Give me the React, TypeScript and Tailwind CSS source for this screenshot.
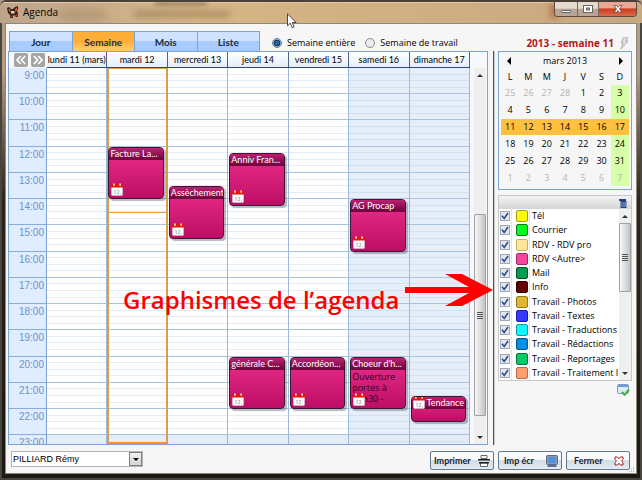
import { useState } from "react";
import { clsx } from "clsx";

const tabs = ["Jour", "Semaine", "Mois", "Liste"];

const days = ["lundi 11 (mars)", "mardi 12", "mercredi 13", "jeudi 14", "vendredi 15", "samedi 16", "dimanche 17"];

const firstHour = 9;
// the grid is cut off shortly after 23:00
const visibleHours = 14.33;
const hours = Array.from({ length: 15 }, (_, i) => firstHour + i);

type CalendarEvent = {
  day: number;
  start: number;
  end: number;
  title: string;
  note?: string;
};

const events: CalendarEvent[] = [
  { day: 1, start: 12, end: 14, title: "Facture La..." },
  { day: 2, start: 13.5, end: 15.5, title: "Assèchement" },
  { day: 3, start: 12.25, end: 14.25, title: "Anniv Fran..." },
  { day: 5, start: 14, end: 16, title: "AG Procap" },
  { day: 3, start: 20, end: 22, title: "générale C..." },
  { day: 4, start: 20, end: 22, title: "Accordéon..." },
  { day: 5, start: 20, end: 22, title: "Choeur d'h...", note: "Ouverture portes à 19h30 -" },
  { day: 6, start: 21.5, end: 22.5, title: "Tendance" },
];

const weeks = [
  [25, 26, 27, 28, 1, 2, 3],
  [4, 5, 6, 7, 8, 9, 10],
  [11, 12, 13, 14, 15, 16, 17],
  [18, 19, 20, 21, 22, 23, 24],
  [25, 26, 27, 28, 29, 30, 31],
  [1, 2, 3, 4, 5, 6, 7],
];

const categories = [
  { label: "Tél", color: "bg-[#ffff00] border-[#a09a20]" },
  { label: "Courrier", color: "bg-[#00ff1a] border-[#0a7a18]" },
  { label: "RDV - RDV pro", color: "bg-[#ffe79a] border-[#c9b060]" },
  { label: "RDV <Autre>", color: "bg-[#f7459c] border-[#a02868]" },
  { label: "Mail", color: "bg-[#009c50] border-[#04502c]" },
  { label: "Info", color: "bg-[#660000] border-[#2c0000]" },
  { label: "Travail - Photos", color: "bg-[#e0b830] border-[#94781c]" },
  { label: "Travail - Textes", color: "bg-[#3838ff] border-[#1c1ca0]" },
  { label: "Travail - Traductions", color: "bg-[#10f8ff] border-[#149aa4]" },
  { label: "Travail - Rédactions", color: "bg-[#0090e4] border-[#0c5488]" },
  { label: "Travail - Reportages", color: "bg-[#00cc66] border-[#0c703c]" },
  { label: "Travail - Traitement I", color: "bg-[#ff9c70] border-[#b86a48]" },
];

const toPercent = (value: number) => `${(value / visibleHours) * 100}%`;

function AppIcon() {
  return (
    <svg viewBox="0 0 12 12" className="h-3 w-3">
      <path d="M0 2l2-1 2 2h2l2-2 3-1v3l-1 2 1 2v4H8.500V9.500H6V12H3V9L1 7z" fill="#3a2118" />
      <path d="M1.500 2.500l2 1v2H2zM8 3l2-1.500V4L8.500 6z" fill="#d8603c" />
      <path d="M4 5h3.500v2.500H4z" fill="#e8d4b0" />
      <path d="M3.500 9.500h2v2h-2zM8.500 8h2v2.500h-2z" fill="#a8302c" />
    </svg>
  );
}

function EventIcon({ className }: { className?: string }) {
  return (
    <svg viewBox="0 0 12 13" className={clsx("h-[13px] w-3 shrink-0", className)}>
      <rect x="0.5" y="2" width="11" height="10.5" rx="0.8" fill="#fff" stroke="#cfcfcf" strokeWidth="0.6" />
      <path d="M0 1h12v3.500H0z" fill="#e8140c" />
      <path d="M2.200 0.500h1.400v2.200H2.200zM8.400.5h1.400v2.200H8.400z" fill="#fff" />
      <path d="M3.200 7.500h1v3.500M5.800 7.500h2v1.600l-2 1.600h2.400M9 11h1" fill="none" stroke="#a4a4a4" strokeWidth="0.8" />
    </svg>
  );
}

function WindowButtons() {
  return (
    <div className="mr-[5px] flex h-[15px] self-start overflow-hidden rounded-b-[4px] border border-t-0 border-[#5c4a40]">
      <button aria-label="Réduire" className="grid w-[23px] place-items-center border-r border-[#7c6a5c] bg-linear-to-b from-[#e4dace] from-45% to-[#b8a594] to-50%">
        <span className="mt-1 h-[3px] w-[10px] rounded-[1px] border border-[#666] bg-white" />
      </button>
      <button aria-label="Agrandir" className="grid w-[21px] place-items-center border-r border-[#7c6a5c] bg-linear-to-b from-[#e4dace] from-45% to-[#b8a594] to-50%">
        <svg viewBox="0 0 10 8" className="h-2 w-[10px]">
          <rect x="0.5" y="0.5" width="9" height="7" fill="#fff" stroke="#666" />
          <rect x="3.5" y="3" width="3" height="2" fill="#b8a594" stroke="#666" />
        </svg>
      </button>
      <button aria-label="Fermer la fenêtre" className="grid w-[37px] place-items-center bg-linear-to-b from-[#e8a898] from-40% via-[#cc3c20] via-50% to-[#dc6848]">
        <svg viewBox="0 0 10 8" className="h-2 w-[10px]">
          <path d="M1 .5h2.500L5 2.400 6.500.5H9L6.500 4 9 7.500H6.500L5 5.600 3.500 7.500H1L3.500 4z" fill="#fff" stroke="#5a3434" strokeWidth="0.7" />
        </svg>
      </button>
    </div>
  );
}

function TitleBar() {
  return (
    <header className="relative flex h-[23px] shrink-0 items-center overflow-hidden rounded-t-[6px] border-t-2 border-[#4a4038] bg-linear-to-r from-[#bda58c] via-[#d6b586] via-30% to-[#c8a880]">
      <div className="absolute top-0 left-0 h-px w-full bg-[#e0cba8]" />
      <div className="absolute top-[7px] left-[60px] h-3 w-[46px] rounded-full bg-[#8a6c4c]/30 blur-[4px]" />
      <div className="absolute top-[9px] left-[134px] h-1.5 w-[96px] rounded-full bg-[#6c5034]/40 blur-[3px]" />
      <div className="absolute top-0 left-[155px] h-[3px] w-[52px] bg-[#5c442c]/60 blur-[2px]" />
      <div className="absolute top-[1px] right-[84px] h-4 w-2 rounded-full bg-[#b04c28]/60 blur-[3px]" />
      <div className="relative flex flex-1 items-center gap-1 pb-0.5 pl-[7px]">
        <AppIcon />
        <h1 className="text-[10px] leading-3 text-black">Agenda</h1>
      </div>
      <div className="relative flex h-full">
        <WindowButtons />
      </div>
    </header>
  );
}

function NavButton({ label, back }: { label: string; back?: boolean }) {
  return (
    <button aria-label={label} className="grid h-[14px] w-[14px] place-items-center rounded-[2px] bg-[#a4a4a4]">
      <svg viewBox="0 0 12 12" className={clsx("h-3 w-3", !back && "rotate-180")}>
        <path d="M5.800 2L2 6l3.800 4M10.200 2L6.400 6l3.800 4" fill="none" stroke="#fff" strokeWidth="1.700" />
      </svg>
    </button>
  );
}

function ScrollBar({ className, thumb }: { className?: string; thumb: string }) {
  return (
    <div className={clsx("flex flex-col items-center bg-[#efefef]", className)}>
      <button aria-label="Défiler vers le haut" className="grid h-[14px] place-items-center">
        <svg viewBox="0 0 6 3" className="h-[3px] w-1.5"><path d="M3 0l3 3H0z" fill="#333" /></svg>
      </button>
      <div className="relative w-full flex-1">
        <div className={clsx("absolute inset-x-0 grid place-items-center rounded-[1px] border border-[#a0a0a0] bg-linear-to-r from-[#f8f8f8] to-[#c4c4c8]", thumb)}>
          <div className="flex h-[7px] w-1.5 flex-col justify-between">
            <i className="h-px bg-[#555]" />
            <i className="h-px bg-[#555]" />
            <i className="h-px bg-[#555]" />
            <i className="h-px bg-[#555]" />
          </div>
        </div>
      </div>
      <button aria-label="Défiler vers le bas" className="grid h-[14px] place-items-center">
        <svg viewBox="0 0 6 3" className="h-[3px] w-1.5"><path d="M0 0h6L3 3z" fill="#333" /></svg>
      </button>
    </div>
  );
}

function EventCard({ event }: { event: CalendarEvent }) {
  const short = event.end - event.start <= 1;

  return (
    <article
      className="absolute right-[3px] left-px z-10 flex flex-col overflow-hidden rounded-[4px] border border-[#3c1830] bg-linear-to-b from-[#ec2c8c] to-[#bc0c64] shadow-[2px_2px_1px_rgba(70,80,100,0.4)]"
      style={{ top: toPercent(event.start - firstHour), height: toPercent(event.end - event.start) }}
    >
      <h3 className="flex h-3 shrink-0 items-center bg-linear-to-b from-[#c02074] to-[#6c0438] pl-px font-[Lato,sans-serif] text-[9px] leading-3 whitespace-nowrap text-white">
        {short && <EventIcon className="mr-0.5" />}
        {event.title}
      </h3>
      {event.note && <p className="pt-px pl-px text-[9px] leading-[11px] text-[#2c0418]">{event.note}</p>}
      {!short && <EventIcon className="absolute bottom-0.5 left-0.5" />}
    </article>
  );
}

function WeekGrid() {
  return (
    <section className="flex min-h-0 flex-1 border border-[#7ba3d4] bg-[#f6f8fb]">
      <div className="flex min-w-0 flex-1 flex-col">
        <div className="flex h-4 shrink-0">
          <div className="flex w-[38px] shrink-0 items-center justify-center gap-[3px] pl-0.5">
            <NavButton label="Semaine précédente" back />
            <NavButton label="Semaine suivante" />
          </div>
          <div className="grid flex-1 grid-cols-7 border-b border-[#2f4c7c] bg-linear-to-b from-white to-[#e4eefc]">
            {days.map((day) => (
              <div key={day} className="border-r border-[#4c6488] text-center font-[Lato,sans-serif] text-[9px] leading-[15px] whitespace-nowrap text-black">
                {day}
              </div>
            ))}
          </div>
        </div>

        <div className="flex min-h-0 flex-1 overflow-hidden">
          <div className="w-[38px] shrink-0 overflow-hidden border-r border-[#7ba3d4] bg-[#e0ecff]">
            {hours.map((hour) => (
              <div
                key={hour}
                className="border-b border-[#88add8] pt-0.5 pr-0.5 text-right font-['Liberation_Sans',sans-serif] text-[10px] leading-3 text-[#6c93c4]"
                style={{ height: toPercent(1) }}
              >
                {hour}:00
              </div>
            ))}
          </div>
          <div className="grid flex-1 grid-cols-7">
            {days.map((day, index) => (
              <div
                key={day}
                className={clsx("relative min-h-0 border-r border-[#9db9da]", index > 4 ? "bg-[#e6eef9]" : "bg-white", index === 1 && "z-[1]")}
              >
                <div className="h-full overflow-hidden">
                  {hours.map((hour) => (
                    <div
                      key={hour}
                      className={clsx("flex flex-col border-b border-[#a9c3de]", hour === 23 && "bg-[#e4ecf7]")}
                      style={{ height: toPercent(1) }}
                    >
                      <div className={clsx("flex-1 border-b", index > 4 ? "border-[#d3e0f0]" : "border-[#e4edf6]")} />
                      <div className={clsx("flex-1 border-b", index > 4 ? "border-[#d3e0f0]" : "border-[#e4edf6]")} />
                      <div className={clsx("flex-1 border-b", index > 4 ? "border-[#d3e0f0]" : "border-[#e4edf6]")} />
                      <div className="flex-1" />
                    </div>
                  ))}
                </div>
                {index === 1 && (
                  <>
                    <div className="absolute inset-y-0 -right-px left-0 border-x-2 border-t border-b-2 border-x-[#d6a04a] border-t-[#d6a04a] border-b-[#f79410]" />
                    <div className="absolute inset-x-0 h-px bg-[#e8a030]" style={{ top: toPercent(14.5 - firstHour) }} />
                  </>
                )}
                {events.filter((event) => event.day === index).map((event) => (
                  <EventCard key={event.title} event={event} />
                ))}
              </div>
            ))}
          </div>
        </div>
      </div>
      <ScrollBar className="mt-4 mr-px ml-1 w-3 shrink-0" thumb="top-[38%] h-[58%]" />
    </section>
  );
}

function MiniCalendar() {
  return (
    <section className="border border-[#7ba3d4] px-0.5 pb-[3px] text-[9px] leading-4 text-black">
      <div className="flex h-[17px] items-center justify-between px-1.5">
        <button aria-label="Mois précédent">
          <svg viewBox="0 0 4 8" className="h-2 w-1"><path d="M4 0v8L0 4z" /></svg>
        </button>
        <span>mars 2013</span>
        <button aria-label="Mois suivant">
          <svg viewBox="0 0 4 8" className="h-2 w-1"><path d="M0 0v8l4-4z" /></svg>
        </button>
      </div>
      <table className="h-[117px] w-full table-fixed border-collapse text-center">
        <thead>
          <tr>
            {["L", "M", "M", "J", "V", "S", "D"].map((letter, i) => (
              <th key={i} className="p-0 font-normal">{letter}</th>
            ))}
          </tr>
        </thead>
        <tbody>
          {weeks.map((week, row) => (
            <tr key={row} className={clsx(row === 2 && "bg-[#ffbf3f]")}>
              {week.map((date, col) => {
                const outside = (row === 0 && date > 20) || row === 5;
                return (
                  <td key={col} className={clsx("p-0", outside && "text-[#b4b4b4]", col === 6 && row !== 2 && "bg-[#d6ffa8]")}>
                    {date}
                  </td>
                );
              })}
            </tr>
          ))}
        </tbody>
      </table>
    </section>
  );
}

function CategoryList() {
  const [unchecked, setUnchecked] = useState<string[]>([]);

  const toggle = (label: string) =>
    setUnchecked((current) => (current.includes(label) ? current.filter((l) => l !== label) : [...current, label]));

  return (
    <section className="border border-[#c8c8c8] bg-white">
      <div className="flex h-[13px] items-center justify-end bg-linear-to-b from-[#f4f4f4] to-[#d4d4d4] pr-1">
        <button aria-label="Tout effacer">
          <svg viewBox="0 0 8 10" className="h-[10px] w-2">
            <path d="M0 1h7v2H0zM1.500 3h6v7h-6z" fill="#26407c" />
            <path d="M3 4v5M5 4v5M6.800 4v5" stroke="#a8bce4" strokeWidth="0.8" />
          </svg>
        </button>
      </div>
      <div className="flex">
        <ul className="grid h-[171px] min-w-0 flex-1 auto-rows-fr">
          {categories.map(({ label, color }) => (
            <li key={label} className="min-w-0">
              <label className="flex h-full items-center text-[9px] leading-3 whitespace-nowrap text-black">
                <span className="grid h-full w-[13px] shrink-0 place-items-center border-r border-[#e4e4e4]">
                  <input
                    type="checkbox"
                    checked={!unchecked.includes(label)}
                    onChange={() => toggle(label)}
                    className="peer col-start-1 row-start-1 h-[10px] w-[10px] appearance-none border border-[#a4a8b0] bg-[#e2e6ee]"
                  />
                  <svg viewBox="0 0 8 8" className="pointer-events-none invisible col-start-1 row-start-1 h-2 w-2 peer-checked:visible">
                    <path d="M1 3.800l2.200 2.700L7 1" fill="none" stroke="#304c90" strokeWidth="1.600" />
                  </svg>
                </span>
                <span className="flex h-full w-[18px] shrink-0 items-center border-r border-[#e4e4e4] pl-1">
                  <span className={clsx("h-3 w-3 rounded-[2px] border", color)} />
                </span>
                <span className="pl-0.5">{label}</span>
              </label>
            </li>
          ))}
        </ul>
        <ScrollBar className="z-[1] w-3 shrink-0" thumb="top-0 h-[48%]" />
      </div>
    </section>
  );
}

function Sidebar() {
  return (
    <aside className="w-[134px] shrink-0">
      <MiniCalendar />
      <div className="mt-[5px]">
        <CategoryList />
      </div>
      <div className="mt-[3px] flex justify-end pr-0.5">
        <button aria-label="Valider la sélection">
          <svg viewBox="0 0 13 12" className="h-3 w-[13px]">
            <rect x="0.5" y="0.5" width="11" height="9" rx="1" fill="#dce9f7" stroke="#7c9cc0" />
            <path d="M1 1h10v2H1z" fill="#6c9cd4" />
            <path d="M5 8l2.500 2.800L12 5.500" fill="none" stroke="#4cae38" strokeWidth="2" />
          </svg>
        </button>
      </div>
    </aside>
  );
}

function Toolbar() {
  const [tab, setTab] = useState("Semaine");
  const [range, setRange] = useState("full");
  const radio =
    "h-[10px] w-[10px] appearance-none rounded-full border border-[#8c8c8c] bg-[#ececec] checked:border-[#6c8098] checked:bg-[radial-gradient(circle,#1c6ca4_0_2px,#0c2c4c_3px,#e4ecf4_4px)]";

  return (
    <div className="flex h-5 shrink-0 items-stretch">
      <nav className="ml-px flex w-[251px] border-t border-l border-[#7ba3d4]">
        {tabs.map((name) => (
          <button
            key={name}
            onClick={() => setTab(name)}
            className={clsx(
              "flex-1 border-r border-[#7ba3d4] font-[Lato,sans-serif] text-[10px] leading-[18px] font-bold text-[#1c2c44]",
              tab === name
                ? "bg-linear-to-b from-[#ffaf38] from-50% to-[#ffcf6c]"
                : "bg-linear-to-b from-[#cfe2ff] from-45% to-[#a8ccff] to-50%",
            )}
          >
            {name}
          </button>
        ))}
      </nav>
      <label className="ml-3 flex items-center gap-[5px] pt-1 text-[9px] text-black">
        <input type="radio" name="range" checked={range === "full"} onChange={() => setRange("full")} className={radio} />
        Semaine entière
      </label>
      <label className="ml-2.5 flex items-center gap-[5px] pt-1 text-[9px] text-black">
        <input type="radio" name="range" checked={range === "work"} onChange={() => setRange("work")} className={radio} />
        Semaine de travail
      </label>
      <div className="flex flex-1 items-center justify-end gap-1.5 pt-1 pr-2 text-[10px] font-bold text-[#b41820]">
        2013 - semaine 11
        <svg viewBox="0 0 8 12" className="h-3 w-2">
          <path d="M4 0h4L6 4h2L1 12l2-6H1z" fill="#ddd" stroke="#999" strokeWidth="0.7" />
        </svg>
      </div>
    </div>
  );
}

function Footer() {
  const button =
    "flex h-[19px] w-16 items-center justify-between rounded-[2px] border border-[#64788c] bg-linear-to-b from-[#f8fafc] from-45% via-[#d0dce6] via-50% to-[#e4ecf2] pr-[3px] font-[Lato,sans-serif] text-[9px] font-bold text-[#1c2430]";

  return (
    <footer className="mt-1.5 flex h-[22px] shrink-0 items-start pr-[5px] pl-[3px]">
      <div className="relative flex h-4 w-[132px] border border-[#b4b4b4] bg-white">
        <select
          aria-label="Utilisateur"
          className="w-full appearance-none pl-px font-['Liberation_Sans',sans-serif] text-[9px] leading-[14px] text-black"
        >
          <option>PILLIARD Rémy</option>
        </select>
        <span className="pointer-events-none absolute inset-y-0 right-0 grid w-[13px] place-items-center border border-[#808080] bg-linear-to-b from-[#f0f0f0] to-[#d4d4d4]">
          <svg viewBox="0 0 6 3" className="h-[3px] w-1.5"><path d="M0 0h6L3 3z" /></svg>
        </span>
      </div>
      <div className="ml-auto flex gap-1">
        <button className={clsx(button, "pl-[3px]")}>
          Imprimer
          <svg viewBox="0 0 12 12" className="h-3 w-3">
            <path d="M3 0.500h6v3H3zM2.500 8h7v3.500h-7z" fill="#fff" stroke="#444" strokeWidth="0.8" />
            <path d="M0 4h12v1.500H0zM1 7h10v1.500H1z" fill="#222" />
          </svg>
        </button>
        <button className={clsx(button, "pl-[5px]")}>
          Imp écr
          <svg viewBox="0 0 12 12" className="h-3 w-3">
            <rect x="0.500" y="0.500" width="11" height="9" rx="1" fill="#8c98ac" stroke="#5c6880" />
            <path d="M2.500 2h7v6h-7z" fill="#4c90e4" />
            <path d="M2 10h8l1 2H1z" fill="#64708c" />
          </svg>
        </button>
        <button className={clsx(button, "pl-[7px]")}>
          Fermer
          <svg viewBox="0 0 10 10" className="mr-0.5 h-[10px] w-[10px]">
            <path d="M1 1h2.500L5 2.800 6.500 1H9v2.500L7.400 5 9 6.500V9H6.500L5 7.200 3.500 9H1V6.500L2.600 5 1 3.500z" fill="#fff" stroke="#a01c20" />
          </svg>
        </button>
      </div>
      <svg viewBox="0 0 6 6" className="-mr-1 ml-[-1px] h-1.5 w-1.5 shrink-0 self-end" fill="#a8a8a8">
        <path d="M4 0h1v1H4zM2 2h1v1H2zM4 2h1v1H4zM0 4h1v1H0zM2 4h1v1H2zM4 4h1v1H4z" />
      </svg>
    </footer>
  );
}

function Annotation() {
  return (
    <div className="pointer-events-none absolute top-[272px] left-[123px] z-20 flex">
      <p className="pt-3 font-['Trebuchet_MS','Open_Sans',sans-serif] text-[24px] leading-8 font-semibold whitespace-nowrap text-[#ff0000]">
        Graphismes de l’agenda
      </p>
      <svg viewBox="0 0 88 36" className="absolute top-0 left-[282px] h-9 w-[88px]">
        <path d="M0 15h64L40 2h17l31 16-31 16H40l24-13H0z" fill="#ff0000" />
      </svg>
    </div>
  );
}

export default function App() {
  return (
    <div className="relative flex h-screen flex-col overflow-hidden bg-linear-to-b from-[#b59c84] from-15% via-[#2c241a] via-42% to-[#1c1812] font-['Open_Sans','Noto_Sans',sans-serif]">
      <TitleBar />
      <div className="min-h-0 flex-1 border-x-2 border-b-2 border-[#48443e] px-[3px] pb-1">
        <main className="flex h-full flex-col border border-[#8c8880] bg-[#f6f6f6] pt-[7px] pl-0.5">
          <Toolbar />
          <div className="flex min-h-0 flex-1 pr-1">
            <WeekGrid />
            <div className="mr-[3px] ml-[5px] w-0.5 shrink-0 border-l border-[#555] bg-[#ccc]" />
            <Sidebar />
          </div>
          <Footer />
        </main>
      </div>
      <Annotation />
      <svg viewBox="0 0 10 16" className="pointer-events-none absolute top-[13px] left-[287px] h-4 w-[10px]">
        <path d="M.5.800v12l2.800-2.600 1.900 4.500 2-.9-1.900-4.300h3.700z" fill="#fff" stroke="#222" strokeWidth="0.800" />
      </svg>
    </div>
  );
}
